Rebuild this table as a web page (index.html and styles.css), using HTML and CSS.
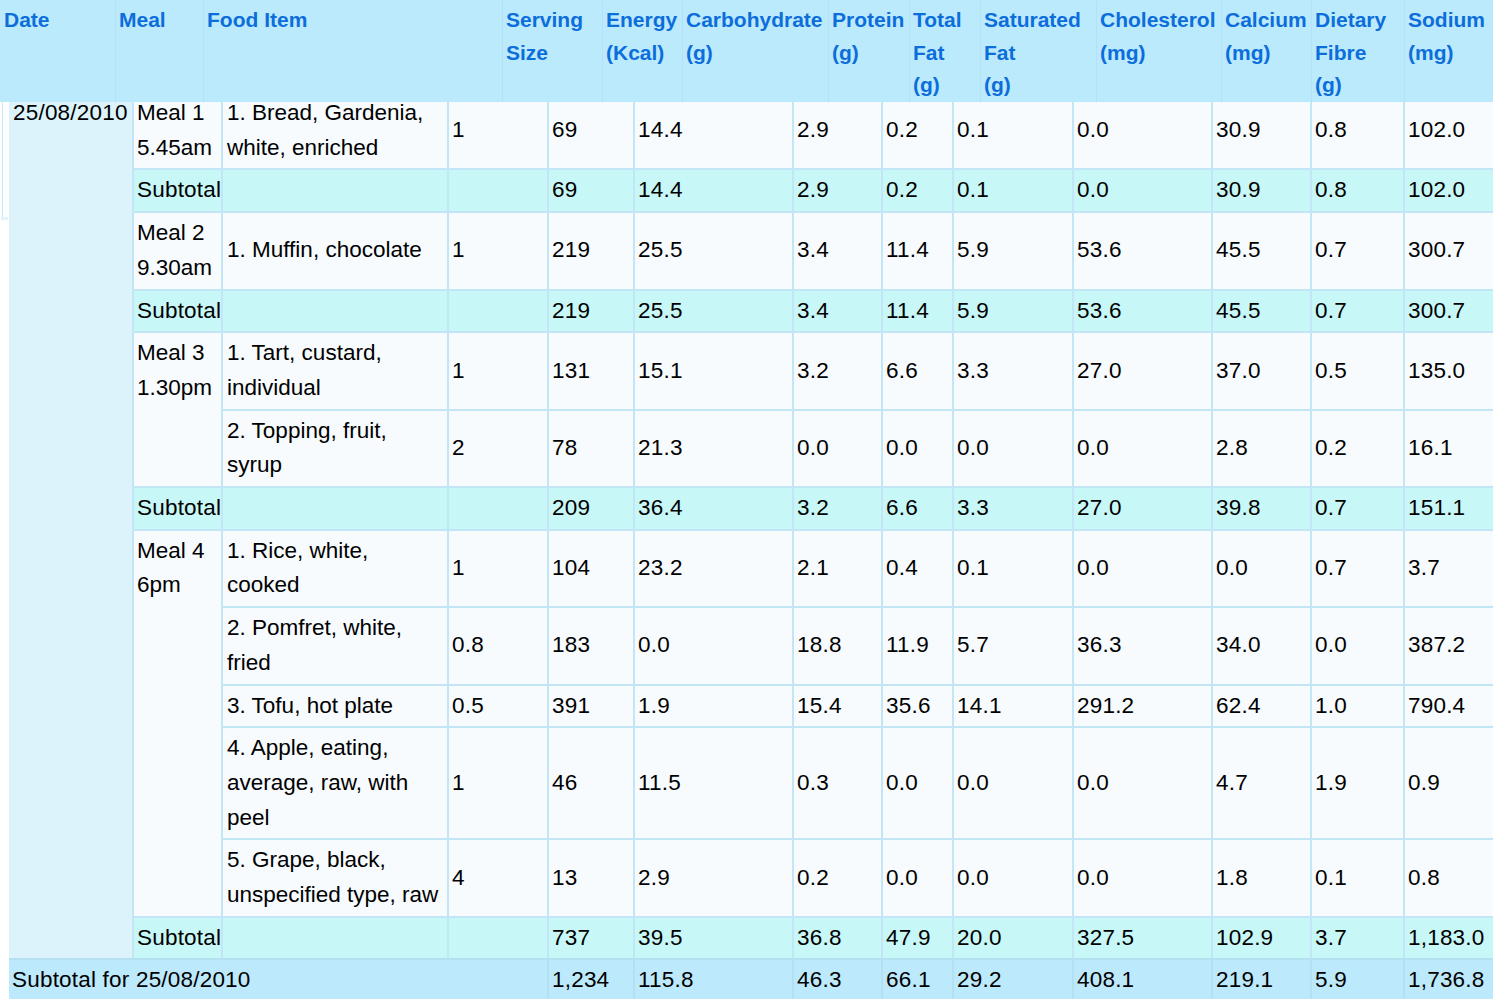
FILE: index.html
```html
<!DOCTYPE html>
<html>
<head>
<meta charset="utf-8">
<title>Food diary</title>
<link rel="stylesheet" href="styles.css">
</head>
<body>
<div class="edge"></div>
<table class="head">
  <colgroup>
    <col class="h1"><col class="h2"><col class="h3"><col class="h4"><col class="h5"><col class="h6"><col class="h7"><col class="h8"><col class="h9"><col class="h10"><col class="h11"><col class="h12"><col class="h13">
  </colgroup>
  <tr>
    <th>Date</th>
    <th>Meal</th>
    <th>Food Item</th>
    <th>Serving<br>Size</th>
    <th>Energy<br>(Kcal)</th>
    <th>Carbohydrate<br>(g)</th>
    <th>Protein<br>(g)</th>
    <th>Total<br>Fat<br>(g)</th>
    <th>Saturated<br>Fat<br>(g)</th>
    <th>Cholesterol<br>(mg)</th>
    <th>Calcium<br>(mg)</th>
    <th>Dietary<br>Fibre<br>(g)</th>
    <th>Sodium<br>(mg)</th>
  </tr>
</table>

<div class="scroller">
<table class="diary">
  <colgroup>
    <col class="c1"><col class="c2"><col class="c3"><col class="c4"><col class="c5"><col class="c6"><col class="c7"><col class="c8"><col class="c9"><col class="c10"><col class="c11"><col class="c12"><col class="c13">
  </colgroup>
  <tbody>
    <tr class="item">
      <td class="date" rowspan="13">25/08/2010</td>
      <td class="meal">Meal 1<br>5.45am</td>
      <td class="food">1. Bread, Gardenia,<br>white, enriched</td>
      <td>1</td><td>69</td><td>14.4</td><td>2.9</td><td>0.2</td><td>0.1</td><td>0.0</td><td>30.9</td><td>0.8</td><td>102.0</td>
    </tr>
    <tr class="sub">
      <td>Subtotal</td><td></td><td></td>
      <td>69</td><td>14.4</td><td>2.9</td><td>0.2</td><td>0.1</td><td>0.0</td><td>30.9</td><td>0.8</td><td>102.0</td>
    </tr>
    <tr class="item">
      <td class="meal">Meal 2<br>9.30am</td>
      <td class="food">1. Muffin, chocolate</td>
      <td>1</td><td>219</td><td>25.5</td><td>3.4</td><td>11.4</td><td>5.9</td><td>53.6</td><td>45.5</td><td>0.7</td><td>300.7</td>
    </tr>
    <tr class="sub">
      <td>Subtotal</td><td></td><td></td>
      <td>219</td><td>25.5</td><td>3.4</td><td>11.4</td><td>5.9</td><td>53.6</td><td>45.5</td><td>0.7</td><td>300.7</td>
    </tr>
    <tr class="item">
      <td class="meal" rowspan="2">Meal 3<br>1.30pm</td>
      <td class="food">1. Tart, custard,<br>individual</td>
      <td>1</td><td>131</td><td>15.1</td><td>3.2</td><td>6.6</td><td>3.3</td><td>27.0</td><td>37.0</td><td>0.5</td><td>135.0</td>
    </tr>
    <tr class="item">
      <td class="food">2. Topping, fruit,<br>syrup</td>
      <td>2</td><td>78</td><td>21.3</td><td>0.0</td><td>0.0</td><td>0.0</td><td>0.0</td><td>2.8</td><td>0.2</td><td>16.1</td>
    </tr>
    <tr class="sub">
      <td>Subtotal</td><td></td><td></td>
      <td>209</td><td>36.4</td><td>3.2</td><td>6.6</td><td>3.3</td><td>27.0</td><td>39.8</td><td>0.7</td><td>151.1</td>
    </tr>
    <tr class="item">
      <td class="meal" rowspan="5">Meal 4<br>6pm</td>
      <td class="food">1. Rice, white,<br>cooked</td>
      <td>1</td><td>104</td><td>23.2</td><td>2.1</td><td>0.4</td><td>0.1</td><td>0.0</td><td>0.0</td><td>0.7</td><td>3.7</td>
    </tr>
    <tr class="item">
      <td class="food">2. Pomfret, white,<br>fried</td>
      <td>0.8</td><td>183</td><td>0.0</td><td>18.8</td><td>11.9</td><td>5.7</td><td>36.3</td><td>34.0</td><td>0.0</td><td>387.2</td>
    </tr>
    <tr class="item">
      <td class="food">3. Tofu, hot plate</td>
      <td>0.5</td><td>391</td><td>1.9</td><td>15.4</td><td>35.6</td><td>14.1</td><td>291.2</td><td>62.4</td><td>1.0</td><td>790.4</td>
    </tr>
    <tr class="item">
      <td class="food">4. Apple, eating,<br>average, raw, with<br>peel</td>
      <td>1</td><td>46</td><td>11.5</td><td>0.3</td><td>0.0</td><td>0.0</td><td>0.0</td><td>4.7</td><td>1.9</td><td>0.9</td>
    </tr>
    <tr class="item">
      <td class="food">5. Grape, black,<br>unspecified type, raw</td>
      <td>4</td><td>13</td><td>2.9</td><td>0.2</td><td>0.0</td><td>0.0</td><td>0.0</td><td>1.8</td><td>0.1</td><td>0.8</td>
    </tr>
    <tr class="sub">
      <td>Subtotal</td><td></td><td></td>
      <td>737</td><td>39.5</td><td>36.8</td><td>47.9</td><td>20.0</td><td>327.5</td><td>102.9</td><td>3.7</td><td>1,183.0</td>
    </tr>
    <tr class="daysub">
      <td class="first" colspan="4">Subtotal for 25/08/2010</td>
      <td>1,234</td><td>115.8</td><td>46.3</td><td>66.1</td><td>29.2</td><td>408.1</td><td>219.1</td><td>5.9</td><td>1,736.8</td>
    </tr>
  </tbody>
</table>
</div>
</body>
</html>
```

FILE: styles.css
```css
html {
  overflow: hidden;
}
body {
  margin: 0;
  padding: 8px 0 0 0;
  background: #ffffff;
  font-family: "Liberation Sans", Arial, sans-serif;
  color: #000000;
}

/* fixed column header lying over the scrolled table */
.head {
  position: fixed;
  top: 0;
  left: 0;
  z-index: 2;
  table-layout: fixed;
  width: 1504px;
  border-collapse: separate;
  border-spacing: 0;
  background: #bceafd;
}
.head th {
  height: 102px;
  box-sizing: border-box;
  padding: 4px 3px 0 3px;
  vertical-align: top;
  text-align: left;
  font-size: 21px;
  font-weight: bold;
  line-height: 32.5px;
  color: #0c6edb;
  white-space: nowrap;
  border-left: 1px solid #b3e2f6;
}
.head th:first-child {
  border-left: none;
  padding-left: 4px;
}
.h1 { width: 115px; }
.h2 { width: 88px; }
.h3 { width: 299px; }
.h4 { width: 100px; }
.h5 { width: 80px; }
.h6 { width: 146px; }
.h7 { width: 81px; }
.h8 { width: 71px; }
.h9 { width: 116px; }
.h10 { width: 125px; }
.h11 { width: 90px; }
.h12 { width: 93px; }
.h13 { width: 100px; }

.edge {
  position: absolute;
  left: 2px;
  top: 102px;
  width: 1px;
  height: 115px;
  background: #c6eaf8;
}
.edge::after {
  content: "";
  position: absolute;
  left: -1px;
  top: 115px;
  width: 7px;
  height: 3px;
  background: #dff4fc;
}

.scroller {
  width: 1493px;
  padding-left: 9px;
  box-sizing: border-box;
  overflow: hidden;
}

.diary {
  table-layout: fixed;
  width: 1504px;
  margin-top: 83px;
  border-collapse: separate;
  border-spacing: 0;
  font-size: 22.5px;
  line-height: 34.7px;
}
.c1 { width: 123px; }
.c2 { width: 89px; }
.c3 { width: 226px; }
.c4 { width: 100px; }
.c5 { width: 86px; }
.c6 { width: 159px; }
.c7 { width: 89px; }
.c8 { width: 71px; }
.c9 { width: 120px; }
.c10 { width: 139px; }
.c11 { width: 99px; }
.c12 { width: 93px; }
.c13 { width: 110px; }

.diary td {
  padding: 3px;
  border-top: 2px solid #c2e6f5;
  border-left: 2px solid #c2e6f5;
  vertical-align: middle;
  text-align: left;
  white-space: nowrap;
  overflow: hidden;
  background: #f7fbfe;
  letter-spacing: 0.2px;
}
.diary td.food {
  padding-left: 4px;
  letter-spacing: 0;
}
.diary td.date {
  border-left: none;
  vertical-align: top;
  padding-left: 4px;
  background: #dcf3fb;
}
.diary td.meal {
  vertical-align: top;
  letter-spacing: 0;
}
.diary tr.sub td {
  background: #c7f7f7;
}
.diary tr.daysub td {
  padding-bottom: 1px;
  background: #bde9fc;
  border-color: #b5e0f2;
}
.diary tr.daysub td.first {
  border-left: none;
}
```
